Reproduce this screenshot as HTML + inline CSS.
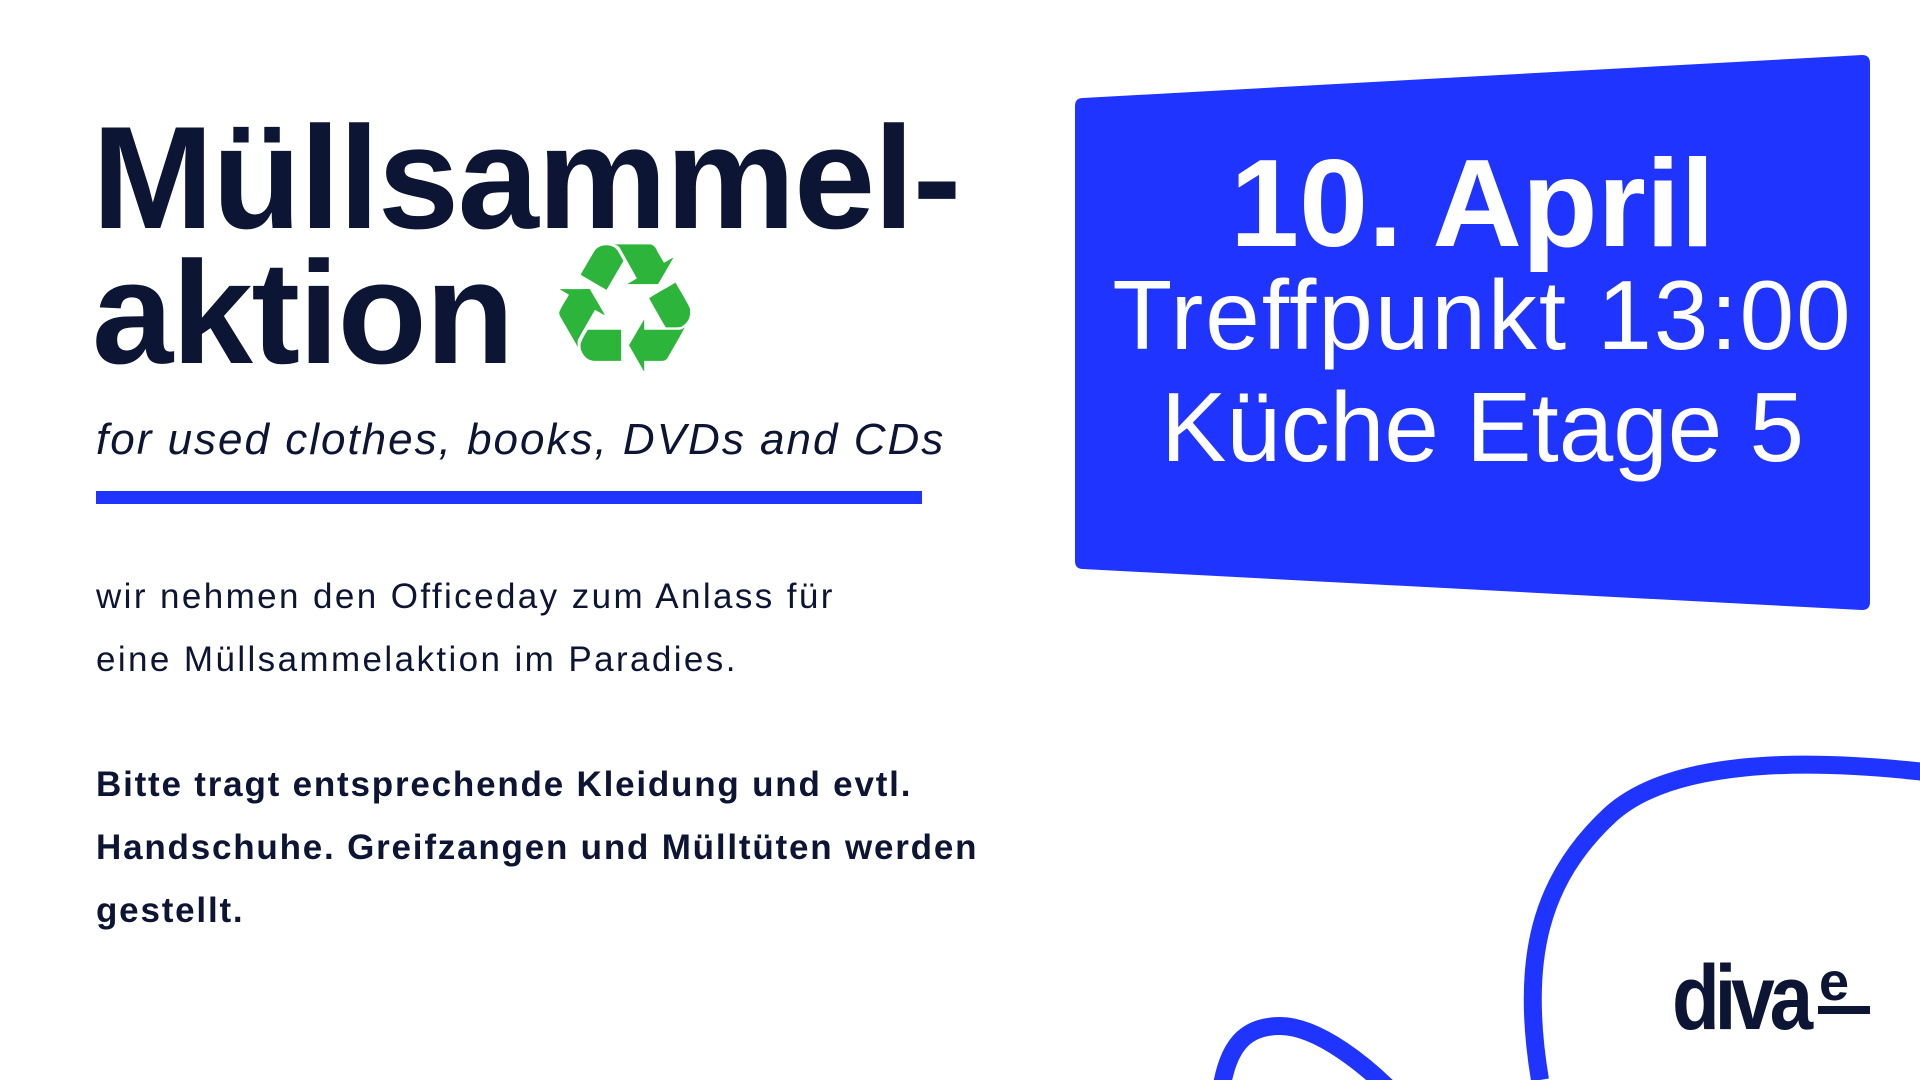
<!DOCTYPE html>
<html><head><meta charset="utf-8"><style>
body{margin:0;width:1920px;height:1080px;background:#fff;position:relative;overflow:hidden;font-family:"Liberation Sans",sans-serif;color:#0c1533}
.a{position:absolute;white-space:nowrap}
</style></head><body>
<svg class="a" style="left:0;top:0" width="1920" height="1080">
<path d="M1083,98 L1862,55 Q1870,55 1870,63 L1870,602 Q1870,610 1862,610 L1083,569 Q1075,569 1075,561 L1075,106 Q1075,98 1083,98Z" fill="#1f35ff"/>
<path d="M1925,772 C1800,758 1670,760 1610,815 C1540,880 1520,960 1540,1080" fill="none" stroke="#1f35ff" stroke-width="18"/>
<path d="M1222,1085 C1230,1040 1250,1026 1280,1026 C1320,1026 1370,1070 1390,1090" fill="none" stroke="#1f35ff" stroke-width="18"/>
</svg>
<div class="a" style="left:92px;top:110px;font-size:146px;font-weight:bold;letter-spacing:-1.5px;line-height:135px">Müllsammel-</div>
<div class="a" style="left:92px;top:245px;font-size:146px;font-weight:bold;letter-spacing:-1.5px;line-height:135px">aktion</div>
<div class="a" style="left:544px;top:220px;font-size:180px;line-height:180px;color:#2cb53a;font-family:'DejaVu Sans',sans-serif">♻</div>
<div class="a" style="left:96px;top:410px;font-size:44px;font-style:italic;letter-spacing:2px;line-height:60px">for used clothes, books, DVDs and CDs</div>
<div class="a" style="left:96px;top:491px;width:826px;height:13px;background:#1f35ff"></div>
<div class="a" style="left:96px;top:565px;font-size:35px;letter-spacing:2.4px;line-height:63px">wir nehmen den Officeday zum Anlass für<br>eine Müllsammelaktion im Paradies.</div>
<div class="a" style="left:96px;top:753px;font-size:35px;font-weight:bold;letter-spacing:1.8px;line-height:63px">Bitte tragt entsprechende Kleidung und evtl.<br>Handschuhe. Greifzangen und Mülltüten werden<br>gestellt.</div>
<div class="a" style="left:1075px;width:795px;top:142px;text-align:center;color:#fff;font-size:124px;font-weight:bold;line-height:124px">10. April</div>
<div class="a" style="left:1075px;width:795px;top:260px;text-align:center;color:#fff;font-size:98px;line-height:110px;padding-left:10px;letter-spacing:2px">Treffpunkt 13:00</div>
<div class="a" style="left:1075px;width:795px;top:372px;text-align:center;color:#fff;font-size:98px;line-height:110px;padding-left:10px">Küche Etage 5</div>
<div class="a" style="left:1672px;top:948px;font-size:92px;font-weight:bold;letter-spacing:-6px;transform:scaleX(.85);transform-origin:left;line-height:100px">diva</div>
<div class="a" style="left:1819px;top:955px;font-size:54px;font-weight:bold;line-height:54px">e</div>
<div class="a" style="left:1818px;top:1006px;width:52px;height:8px;background:#0c1533"></div>
</body></html>
